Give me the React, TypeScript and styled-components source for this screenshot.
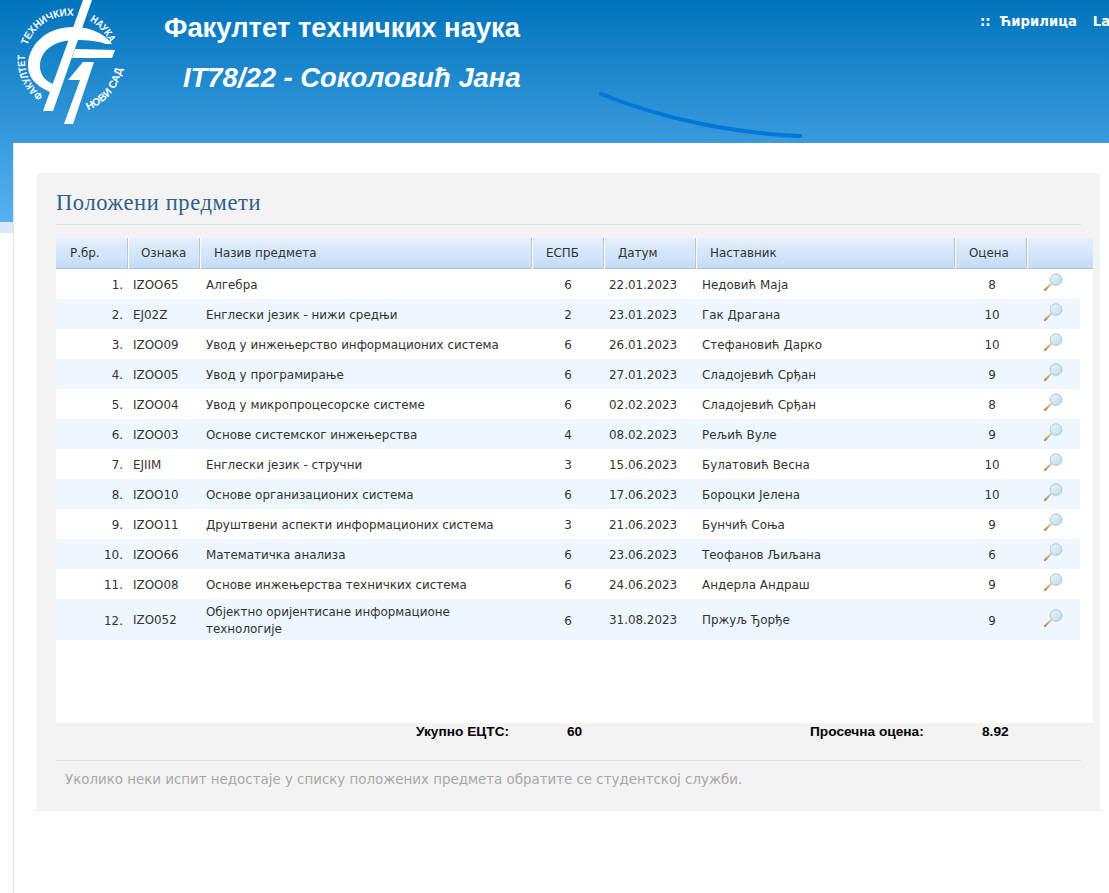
import React from 'react';
import styled, { createGlobalStyle } from 'styled-components';

const GlobalStyle = createGlobalStyle`
  html, body {
    margin: 0;
    padding: 0;
    background: #fff;
    overflow: hidden;
  }
  body {
    font-family: "DejaVu Sans", Verdana, sans-serif;
    font-size: 11.92px;
    color: #333;
  }
`;

const Page = styled.div`
  width: 1109px;
  height: 893px;
  overflow: hidden;
`;

const Header = styled.header`
  position: relative;
  display: flex;
  height: 143px;
  overflow: hidden;
  background: linear-gradient(to bottom, #0074bc 0%, #3a9bdd 100%);
`;

const LogoBox = styled.div`
  flex: 0 0 164px;
`;

const Titles = styled.div`
  flex: 0 0 816px;
  font-family: "Liberation Sans", Arial, sans-serif;
  font-weight: bold;
  color: #fff;
`;

const FacultyName = styled.h1`
  margin: 13px 0 0;
  font-size: 27.4px;
  line-height: 30px;
  font-weight: bold;
`;

const StudentName = styled.h2`
  margin: 20px 0 0 19px;
  font-size: 27.4px;
  line-height: 30px;
  font-weight: bold;
  font-style: italic;
`;

const LangNav = styled.nav`
  display: flex;
  gap: 16px;
  margin-top: 14px;
  height: 16px;
  font-size: 13.2px;
  line-height: 16px;
  font-weight: bold;
  color: #fff;
  white-space: nowrap;
`;

const Body = styled.div`
  display: flex;
  height: 750px;
`;

const Side = styled.aside`
  flex: 0 0 13px;
  display: flex;
  flex-direction: column;
`;

const SideBlue = styled.div`
  height: 79px;
  background: linear-gradient(to bottom, #3b9de0, #56b1ef);
`;

const SideBand = styled.div`
  height: 11px;
  background: #dce9f5;
`;

const Main = styled.main`
  flex: 1;
  min-width: 0;
  border-left: 1px solid #dce9f3;
  padding: 30px 5px 0 19px;
`;

const PanelEdge = styled.div`
  padding: 0 4px;
  border-bottom: 1px solid #eeeeee;
`;

const Panel = styled.section`
  height: 637px;
  box-sizing: border-box;
  padding: 16px 19px 0;
  background: #f3f3f3;
`;

const PanelTitle = styled.h3`
  margin: 0;
  height: 35px;
  border-bottom: 1px solid #dfdfdf;
  font-family: "Liberation Serif", "Times New Roman", serif;
  font-size: 22.5px;
  line-height: 28px;
  font-weight: normal;
  letter-spacing: 0.62px;
  color: #2f5f88;
`;

const TableWrap = styled.div`
  width: 1037px;
  height: 485px;
  margin-top: 13px;
  background: #fff;
`;

const COLUMNS = '73px 72px 332px 72px 92px 259px 72px 52px';

const HeadRow = styled.div`
  display: grid;
  grid-template-columns: ${COLUMNS} 13px;
  height: 30px;
  border-bottom: 1px solid #a9bfd6;
  background: linear-gradient(to bottom, #e4f0fd 0%, #c4dcf7 100%);
`;

const HeadCell = styled.div`
  padding-left: 13px;
  border-right: 1px solid #fff;
  box-shadow: inset -1px 0 0 #b3c7dc;
  line-height: 31px;
  color: #333;
  white-space: nowrap;

  &:first-child {
    padding-left: 14px;
  }
  &:nth-child(2) {
    padding-left: 12px;
  }
`;

const HeadEnd = styled.div`
  grid-column: span 2;
`;

const Row = styled.div<{ $odd: boolean; $tall?: boolean }>`
  display: grid;
  grid-template-columns: ${COLUMNS};
  align-items: center;
  box-sizing: border-box;
  width: 1024px;
  min-height: ${p => (p.$tall ? '41px' : '30px')};
  padding-top: 2px;
  background: ${p => (p.$odd ? '#fff' : '#eef7fe')};
`;

const NumCell = styled.div`
  padding-right: 6px;
  text-align: right;
`;

const TextCell = styled.div<{ $tight?: boolean }>`
  padding: 0 5px 0 ${p => (p.$tight ? '4px' : '5px')};
  line-height: 17px;
`;

const CenterCell = styled.div<{ $nudge?: boolean }>`
  padding-right: ${p => (p.$nudge ? '2px' : '0')};
  text-align: center;
`;

const IconCell = styled.div`
  display: flex;
  padding-left: 15px;
  margin-top: -5px;
`;

const Totals = styled.div`
  display: grid;
  grid-template-columns: 360px 151px 243px 172px auto;
  height: 36px;
  padding-top: 1px;
  border-bottom: 1px solid #dfdfdf;
  font-family: "Liberation Sans", Arial, sans-serif;
  font-size: 13.7px;
  line-height: 16px;
  font-weight: bold;
  color: #000;
`;

const Note = styled.p`
  margin: 10px 0 0 9px;
  font-size: 13.4px;
  line-height: 17px;
  color: #a8a8a8;
`;

const LogoText = styled.text`
  font-family: "Liberation Sans", Arial, sans-serif;
  font-size: 10.5px;
  font-weight: bold;
`;

const Logo = () => (
  <svg width="130" height="130" viewBox="0 0 130 130">
    <defs>
      <path id="logo-top" d="M44 96 A44 44 0 1 1 109.6 43" />
      <path id="logo-bottom" d="M88 110 A54 54 0 0 0 122.5 67" />
    </defs>
    <g fill="#fff">
      <polygon points="83,0 92,0 53,111 43,111" />
      <path d="M112 44 C104 33 90 27 73 27 C44 27 28 47 28 66 C28 76 34 85 50 92 L53 84 C44 80 40 74 40 66 C40 50 55 40 76 40 C88 40 98 41 106 44 Z" />
      <polygon points="75,49 115,50 112,58 72,58" />
      <polygon points="83,62 94,62 73,124 64,124 80,80 68,80" />
      <LogoText>
        <textPath href="#logo-top" startOffset="1" textLength="46" lengthAdjust="spacingAndGlyphs">ФАКУЛТЕТ</textPath>
      </LogoText>
      <LogoText>
        <textPath href="#logo-top" startOffset="57" textLength="59" lengthAdjust="spacingAndGlyphs">ТЕХНИЧКИХ</textPath>
      </LogoText>
      <LogoText>
        <textPath href="#logo-top" startOffset="133" textLength="30" lengthAdjust="spacingAndGlyphs">НАУКА</textPath>
      </LogoText>
      <LogoText>
        <textPath href="#logo-bottom" textLength="56" lengthAdjust="spacing">НОВИ САД</textPath>
      </LogoText>
    </g>
  </svg>
);

const Curve = styled.svg`
  position: absolute;
  left: 598px;
  top: 90px;
`;

const Magnifier = () => (
  <svg width="20" height="19" viewBox="0 0 20 19">
    <defs>
      <linearGradient id="glass" x1="0" y1="0" x2="1" y2="1">
        <stop offset="0" stopColor="#edf7fb" />
        <stop offset="1" stopColor="#b4dcee" />
      </linearGradient>
      <linearGradient id="handle" x1="0" y1="1" x2="1" y2="0">
        <stop offset="0" stopColor="#b9834f" />
        <stop offset="1" stopColor="#eccfb0" />
      </linearGradient>
    </defs>
    <line x1="2" y1="17" x2="8" y2="11" stroke="url(#handle)" strokeWidth="2.2" strokeLinecap="round" />
    <circle cx="13" cy="6.5" r="5.8" fill="url(#glass)" stroke="#b4c2c8" strokeWidth="1" />
  </svg>
);

type Exam = [string, string, number, string, string, number];

const exams: Exam[] = [
  ['IZOO65', 'Алгебра', 6, '22.01.2023', 'Недовић Маја', 8],
  ['EJ02Z', 'Енглески језик - нижи средњи', 2, '23.01.2023', 'Гак Драгана', 10],
  ['IZOO09', 'Увод у инжењерство информационих система', 6, '26.01.2023', 'Стефановић Дарко', 10],
  ['IZOO05', 'Увод у програмирање', 6, '27.01.2023', 'Сладојевић Срђан', 9],
  ['IZOO04', 'Увод у микропроцесорске системе', 6, '02.02.2023', 'Сладојевић Срђан', 8],
  ['IZOO03', 'Основе системског инжењерства', 4, '08.02.2023', 'Рељић Вуле', 9],
  ['EJIIM', 'Енглески језик - стручни', 3, '15.06.2023', 'Булатовић Весна', 10],
  ['IZOO10', 'Основе организационих система', 6, '17.06.2023', 'Бороцки Јелена', 10],
  ['IZOO11', 'Друштвени аспекти информационих система', 3, '21.06.2023', 'Бунчић Соња', 9],
  ['IZOO66', 'Математичка анализа', 6, '23.06.2023', 'Теофанов Љиљана', 6],
  ['IZOO08', 'Основе инжењерства техничких система', 6, '24.06.2023', 'Андерла Андраш', 9],
  ['IZO052', 'Објектно оријентисане информационе технологије', 6, '31.08.2023', 'Пржуљ Ђорђе', 9],
];

const App: React.FC = () => {
  return (
    <Page>
      <GlobalStyle />
      <Header>
        <LogoBox>
          <Logo />
        </LogoBox>
        <Titles>
          <FacultyName>Факултет техничких наука</FacultyName>
          <StudentName>IT78/22 - Соколовић Јана</StudentName>
        </Titles>
        <LangNav>
          <span>::&nbsp; Ћирилица</span>
          <span>Latinica</span>
        </LangNav>
        <Curve width="210" height="52" viewBox="0 0 210 52">
          <path d="M3 4 C60 27 130 43 202 46" fill="none" stroke="#0077d9" strokeWidth="4" strokeLinecap="round" />
        </Curve>
      </Header>
      <Body>
        <Side>
          <SideBlue />
          <SideBand />
        </Side>
        <Main>
          <PanelEdge>
            <Panel>
              <PanelTitle>Положени предмети</PanelTitle>
              <TableWrap>
                <HeadRow>
                  <HeadCell>Р.бр.</HeadCell>
                  <HeadCell>Ознака</HeadCell>
                  <HeadCell>Назив предмета</HeadCell>
                  <HeadCell>ЕСПБ</HeadCell>
                  <HeadCell>Датум</HeadCell>
                  <HeadCell>Наставник</HeadCell>
                  <HeadCell>Оцена</HeadCell>
                  <HeadEnd />
                </HeadRow>
                {exams.map((exam, i) => (
                  <Row key={exam[0]} $odd={i % 2 === 0} $tall={i === exams.length - 1}>
                    <NumCell>{i + 1}.</NumCell>
                    <TextCell $tight>{exam[0]}</TextCell>
                    <TextCell>{exam[1]}</TextCell>
                    <CenterCell $nudge>{exam[2]}</CenterCell>
                    <TextCell $tight>{exam[3]}</TextCell>
                    <TextCell>{exam[4]}</TextCell>
                    <CenterCell>{exam[5]}</CenterCell>
                    <IconCell>
                      <Magnifier />
                    </IconCell>
                  </Row>
                ))}
              </TableWrap>
              <Totals>
                <span />
                <span>Укупно ЕЦТС:</span>
                <span>60</span>
                <span>Просечна оцена:</span>
                <span>8.92</span>
              </Totals>
              <Note>Уколико неки испит недостаје у списку положених предмета обратите се студентској служби.</Note>
            </Panel>
          </PanelEdge>
        </Main>
      </Body>
    </Page>
  );
};

export default App;
